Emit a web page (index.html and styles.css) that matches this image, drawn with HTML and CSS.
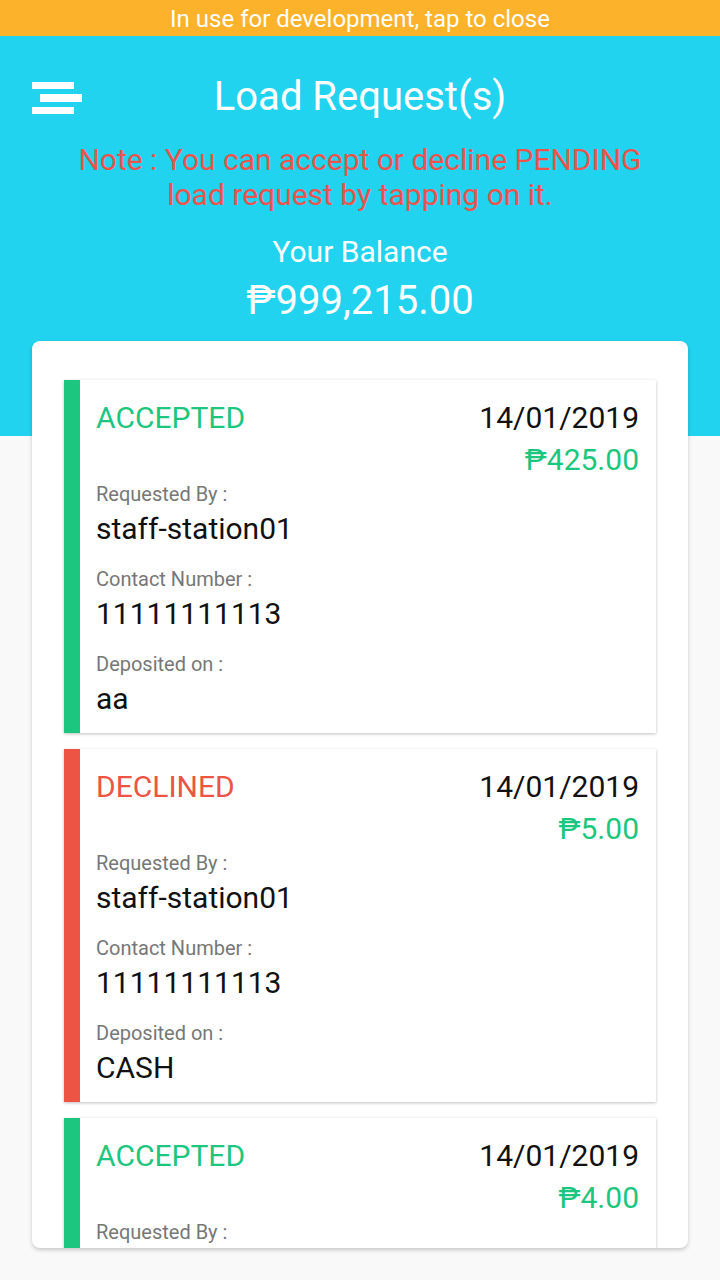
FILE: index.html
```html
<!DOCTYPE html>
<html lang="en">

<head>
    <meta charset="UTF-8">
    <meta name="viewport" content="width=device-width, initial-scale=1.0">
    <title>Load Request(s)</title>
    <link rel="stylesheet" href="styles.css">
</head>

<body>
    <div class="dev-bar">In use for development, tap to close</div>

    <div class="header">
        <div class="top-row">
            <div class="menu-btn">
                <svg width="50" height="33" viewBox="0 0 50 33">
                    <rect x="0" y="0" width="42" height="7" fill="#fff" />
                    <rect x="8" y="12" width="42" height="8" fill="#fff" />
                    <rect x="0" y="25" width="42" height="7" fill="#fff" />
                </svg>
            </div>
            <h1>Load Request(s)</h1>
            <div></div>
        </div>
        <p class="note">Note : You can accept or decline PENDING<br>load request by tapping on it.</p>
        <p class="balance-label">Your Balance</p>
        <p class="balance">₱999,215.00</p>
    </div>

    <div class="list-wrap">
        <div class="list">
            <div class="request accepted">
                <div class="request-head">
                    <span class="status">ACCEPTED</span>
                    <div class="right">
                        <span class="date">14/01/2019</span>
                        <span class="amount">₱425.00</span>
                    </div>
                </div>
                <div class="field">
                    <span class="label">Requested By :</span>
                    <span class="value">staff-station01</span>
                </div>
                <div class="field">
                    <span class="label">Contact Number :</span>
                    <span class="value">11111111113</span>
                </div>
                <div class="field">
                    <span class="label">Deposited on :</span>
                    <span class="value">aa</span>
                </div>
            </div>

            <div class="request declined">
                <div class="request-head">
                    <span class="status">DECLINED</span>
                    <div class="right">
                        <span class="date">14/01/2019</span>
                        <span class="amount">₱5.00</span>
                    </div>
                </div>
                <div class="field">
                    <span class="label">Requested By :</span>
                    <span class="value">staff-station01</span>
                </div>
                <div class="field">
                    <span class="label">Contact Number :</span>
                    <span class="value">11111111113</span>
                </div>
                <div class="field">
                    <span class="label">Deposited on :</span>
                    <span class="value">CASH</span>
                </div>
            </div>

            <div class="request accepted">
                <div class="request-head">
                    <span class="status">ACCEPTED</span>
                    <div class="right">
                        <span class="date">14/01/2019</span>
                        <span class="amount">₱4.00</span>
                    </div>
                </div>
                <div class="field">
                    <span class="label">Requested By :</span>
                </div>
            </div>
        </div>
    </div>
</body>

</html>
```

FILE: styles.css
```css
body {
    font-family: Roboto, "Liberation Sans", sans-serif;
    margin: 0;
    padding: 0;
    background-color: #f9f9f9;
    height: 1280px;
    overflow: hidden;
}

.dev-bar {
    height: 36px;
    line-height: 38px;
    background-color: #fdb22b;
    color: #ffffff;
    font-size: 24px;
    text-align: center;
}

.header {
    background-color: #22d3ef;
    height: 400px;
    text-align: center;
    color: #ffffff;
}

.top-row {
    display: grid;
    grid-template-columns: 1fr auto 1fr;
    align-items: center;
    padding: 37px 32px 0;
}

.menu-btn {
    display: flex;
    align-items: center;
}

.menu-btn svg {
    display: block;
    margin-top: 3px;
}

h1 {
    margin: 0;
    font-size: 40px;
    font-weight: normal;
    line-height: 48px;
}

.note {
    margin: 21px 0 0;
    color: #ea544c;
    font-size: 30px;
    line-height: 35px;
}

.balance-label {
    margin: 23px 0 0;
    font-size: 30px;
    line-height: 34px;
}

.balance {
    margin: 9px 0 0;
    font-size: 40px;
    line-height: 46px;
}

.list-wrap {
    margin: -95px 32px 0;
    height: 907px;
    background: #ffffff;
    border-radius: 8px;
    box-shadow: 0 2px 4px rgba(0, 0, 0, 0.2);
    overflow: hidden;
}

.list {
    padding: 39px 32px 0;
    display: flex;
    flex-direction: column;
    gap: 16px;
}

.request {
    background: #ffffff;
    border-left: 16px solid #1dc67f;
    box-shadow: 0 1px 3px rgba(0, 0, 0, 0.25);
    padding: 20px 17px 17px 16px;
}

.request.declined {
    border-left-color: #ee5444;
}

.request-head {
    display: flex;
    justify-content: space-between;
    align-items: flex-start;
    margin-bottom: 4px;
}

.status {
    font-size: 30px;
    line-height: 36px;
    color: #1dc67f;
}

.declined .status {
    color: #ec5444;
}

.right {
    display: flex;
    flex-direction: column;
    align-items: flex-end;
    gap: 6px;
}

.date {
    font-size: 30px;
    line-height: 36px;
    color: #111111;
}

.amount {
    font-size: 30px;
    line-height: 36px;
    color: #1dc67f;
}

.field {
    display: flex;
    flex-direction: column;
    margin-bottom: 21px;
}

.field:last-child {
    margin-bottom: 0;
}

.label {
    font-size: 20px;
    line-height: 24px;
    color: #777777;
    margin-bottom: 6px;
}

.value {
    font-size: 30px;
    line-height: 34px;
    color: #111111;
}
```
